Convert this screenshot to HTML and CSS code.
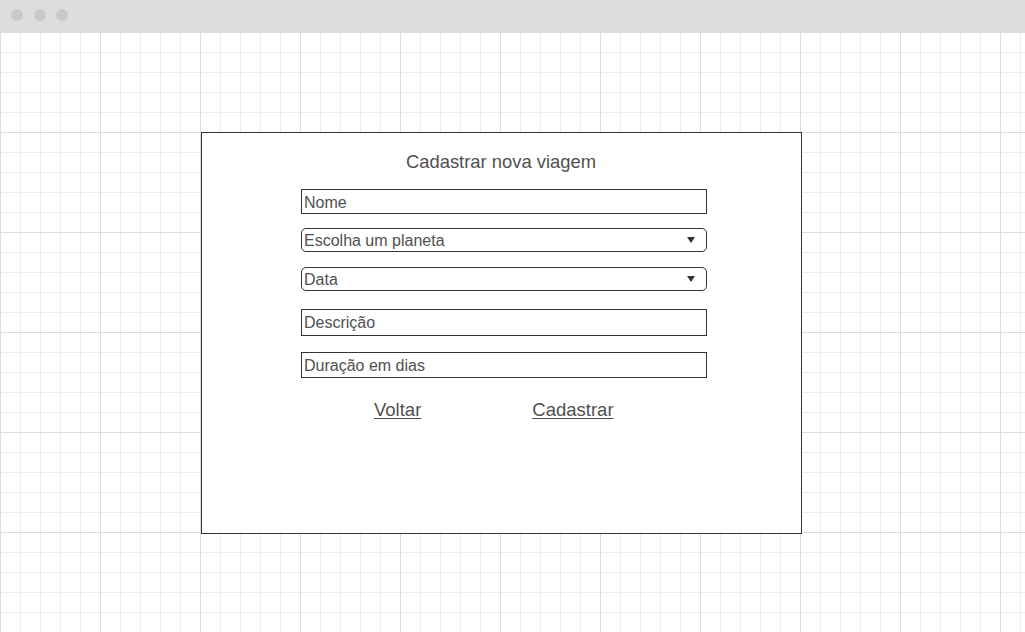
FILE: index.html
```html
<!DOCTYPE html>
<html lang="pt">
<head>
<meta charset="utf-8">
<link rel="stylesheet" href="styles.css">
</head>
<body>
<div class="window">
  <div class="titlebar">
    <span class="dot"></span><span class="dot"></span><span class="dot"></span>
  </div>
  <div class="canvas">
    <div class="card">
      <div class="title">Cadastrar nova viagem</div>
      <div class="form">
        <div class="field field-nome">Nome</div>
        <div class="field select sel-1">Escolha um planeta<span class="caret"></span></div>
        <div class="field select sel-2">Data<span class="caret"></span></div>
        <div class="field field-desc">Descrição</div>
        <div class="field field-dur">Duração em dias</div>
        <div class="actions">
          <a class="link link-back">Voltar</a>
          <a class="link link-submit">Cadastrar</a>
        </div>
      </div>
    </div>
  </div>
</div>
</body>
</html>
```
FILE: styles.css
```css
* { box-sizing: border-box; }
html, body { margin: 0; padding: 0; }
body {
  width: 1025px;
  height: 632px;
  overflow: hidden;
  font-family: "Liberation Sans", Arial, sans-serif;
  background: #fff;
}
.window { display: flex; flex-direction: column; height: 632px; }
.titlebar {
  height: 32px;
  background: #dddddd;
  display: flex;
  align-items: center;
  gap: 10.5px;
  padding-left: 11px;
  padding-bottom: 2px;
}
.dot {
  width: 12px;
  height: 12px;
  border-radius: 50%;
  background: #c9c9c9;
}
.canvas {
  flex: 1;
  background-color: #fff;
  background-image:
    linear-gradient(to right, #dcdcdc 1px, transparent 1px),
    linear-gradient(to bottom, #dcdcdc 1px, transparent 1px),
    linear-gradient(to right, #ececec 1px, transparent 1px),
    linear-gradient(to bottom, #ececec 1px, transparent 1px);
  background-size: 100px 100px, 100px 100px, 20px 20px, 20px 20px;
  background-position: 0 0, 0 0, 0 0, 0 0;
  padding-top: 100px;
  padding-left: 201px;
}
.card {
  width: 601px;
  height: 402px;
  background: #fff;
  border: 1px solid #333;
  display: flex;
  flex-direction: column;
  padding-top: 18px;
  color: #505050;
}
.title {
  text-align: center;
  font-size: 18.4px;
  line-height: 22px;
  color: #505050;
  padding-right: 1px;
}
.form {
  display: flex;
  flex-direction: column;
  padding-left: 99px;
}
.field {
  position: relative;
  width: 406px;
  border: 1px solid #333;
  font-size: 16px;
  color: #505050;
  padding-left: 2px;
  padding-top: 2px;
  display: flex;
  align-items: center;
}
.field-nome { margin-top: 16px; height: 25px; }
.sel-1 { margin-top: 14px; height: 24px; border-radius: 5px; }
.sel-2 { margin-top: 15px; height: 24px; border-radius: 5px; }
.field-desc { margin-top: 18px; height: 27px; padding-top: 1px; }
.field-dur { margin-top: 16px; height: 26px; }
.caret {
  position: absolute;
  right: 11px;
  top: 8px;
  width: 0;
  height: 0;
  border-left: 4px solid transparent;
  border-right: 4px solid transparent;
  border-top: 6px solid #333;
}
.actions {
  display: flex;
  margin-top: 21px;
  font-size: 18.5px;
  line-height: 22px;
}
.link {
  color: #505050;
  text-decoration: underline;
  text-underline-offset: 2px;
}
.link-back { margin-left: 73px; }
.link-submit { margin-left: 111px; }
```
